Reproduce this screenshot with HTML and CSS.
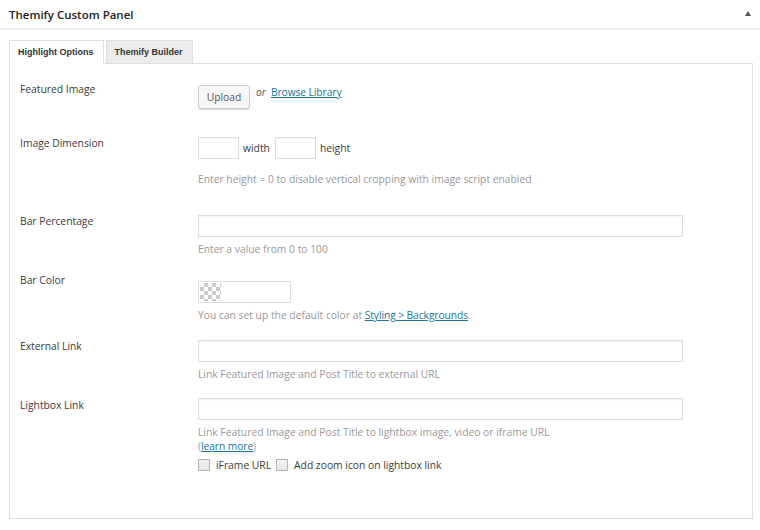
FILE: index.html
```html
<!DOCTYPE html>
<html>
<head>
<meta charset="utf-8">
<link rel="stylesheet" href="styles.css">
</head>
<body>
<div class="panel">
  <div class="panel-head">
    <h2 class="panel-title">Themify Custom Panel</h2>
    <span class="toggle-arrow"></span>
  </div>
  <div class="panel-body">
    <div class="tabs">
      <div class="tab tab-active">Highlight Options</div>
      <div class="tab">Themify Builder</div>
    </div>
    <div class="tab-box">
      <div class="row row-first">
        <div class="label">Featured Image</div>
        <div class="field field-upload">
          <button class="btn">Upload</button>
          <span class="or">or</span>
          <a class="link" href="#">Browse Library</a>
        </div>
      </div>
      <div class="row row-dim">
        <div class="label">Image Dimension</div>
        <div class="field">
          <div class="dims">
            <input class="input input-small" type="text"><span class="dim-label">width</span>
            <input class="input input-small" type="text"><span class="dim-label">height</span>
          </div>
          <div class="help help-dim">Enter height = 0 to disable vertical cropping with image script enabled</div>
        </div>
      </div>
      <div class="row">
        <div class="label">Bar Percentage</div>
        <div class="field">
          <input class="input input-wide" type="text">
          <div class="help">Enter a value from 0 to 100</div>
        </div>
      </div>
      <div class="row">
        <div class="label">Bar Color</div>
        <div class="field field-color">
          <div class="swatch"><span class="checker"></span></div>
          <div class="help">You can set up the default color at <a class="link" href="#">Styling &gt; Backgrounds</a>.</div>
        </div>
      </div>
      <div class="row">
        <div class="label">External Link</div>
        <div class="field">
          <input class="input input-wide" type="text">
          <div class="help">Link Featured Image and Post Title to external URL</div>
        </div>
      </div>
      <div class="row">
        <div class="label">Lightbox Link</div>
        <div class="field field-flush">
          <input class="input input-wide" type="text">
          <div class="help">Link Featured Image and Post Title to lightbox image, video or iframe URL<br>(<a class="link" href="#">learn more</a>)</div>
          <div class="checks">
            <label class="check"><input type="checkbox" class="cb"><span>iFrame URL</span></label>
            <label class="check"><input type="checkbox" class="cb"><span>Add zoom icon on lightbox link</span></label>
          </div>
        </div>
      </div>
    </div>
  </div>
</div>
</body>
</html>
```
FILE: styles.css
```css
* { box-sizing: border-box; }
body {
  margin: 0;
  background: #fff;
  font-family: "Open Sans", "Liberation Sans", sans-serif;
  font-size: 10.3px;
  color: #444;
}
.panel-head {
  display: flex;
  justify-content: space-between;
  align-items: center;
  height: 30px;
  padding: 0 9px 0 9px;
  border-bottom: 2px solid #f1f1f1;
}
.panel-title {
  margin: 0;
  font-size: 11.5px;
  font-weight: 600;
  color: #222;
}
.toggle-arrow {
  width: 0;
  height: 0;
  border-left: 3.5px solid transparent;
  border-right: 3.5px solid transparent;
  border-bottom: 5px solid #555;
  margin-top: -2px;
}
.panel-body {
  padding: 10px 7px 0 9px;
}
.tabs {
  display: flex;
  gap: 2px;
}
.tab {
  font-family: "Liberation Sans", Arial, sans-serif;
  font-size: 9px;
  font-weight: bold;
  color: #333;
  border: 1px solid #dfdfdf;
  border-bottom: none;
  height: 23px;
  line-height: 22px;
  padding: 0 9px 0 8px;
  background: #ececec;
}
.tab-active {
  background: #fff;
  height: 24px;
  margin-bottom: -1px;
  position: relative;
  z-index: 1;
}
.tab-box {
  border: 1px solid #dfdfdf;
  padding: 18px 10px 46px 10px;
  height: 456px;
}
.row {
  display: grid;
  grid-template-columns: 178px 1fr;
  margin-bottom: 17px;
}
.row-first { margin-bottom: 27px; }
.row-dim { margin-bottom: 28px; }
.label {
  line-height: 14px;
  color: #3a3a3a;
}
.field {
  padding-top: 1px;
  line-height: 14px;
}
.field-upload {
  padding-top: 3px;
  display: flex;
  align-items: flex-start;
}
.field-color { padding-top: 8px; }
.field-flush { padding-top: 0; }
.btn {
  font-family: "Open Sans", sans-serif;
  font-size: 10.3px;
  color: #555;
  height: 24px;
  width: 52px;
  padding: 0;
  background: #f7f7f7;
  border: 1px solid #ccc;
  border-radius: 3px;
  box-shadow: 0 1px 0 #ddd;
}
.or {
  font-style: italic;
  color: #555;
  margin: 0 5px 0 6px;
  line-height: 14px;
}
.link {
  color: #21759b;
  text-decoration: underline;
  letter-spacing: -0.1px;
}
.input {
  display: block;
  height: 22px;
  border: 1px solid #ddd;
  box-shadow: inset 0 1px 2px rgba(0,0,0,0.05);
  background: #fff;
  padding: 0;
  margin: 0;
}
.input-wide { width: 485px; }
.dims {
  display: flex;
  align-items: center;
}
.input-small { width: 41px; }
.dim-label {
  color: #3a3a3a;
  margin: 0 5px 0 4px;
}
.help {
  color: #999;
  margin-top: 5px;
}
.help-dim { margin-top: 13px; }
.swatch {
  width: 93px;
  height: 22px;
  border: 1px solid #ddd;
  background: #fff;
  padding: 1px;
}
.checker {
  display: block;
  width: 21px;
  height: 18px;
  background: repeating-conic-gradient(#cbcbcb 0 25%, #fff 0 50%) 0 0 / 8px 8px;
}
.checks {
  display: flex;
  gap: 5px;
  margin-top: 5px;
  color: #3a3a3a;
}
.check {
  display: flex;
  align-items: center;
}
.cb {
  appearance: none;
  -webkit-appearance: none;
  width: 12px;
  height: 12px;
  margin: 0 6px 0 0;
  border: 1px solid #b4b4b4;
  background: linear-gradient(#f2f2f2, #e8e8e8);
}
```
